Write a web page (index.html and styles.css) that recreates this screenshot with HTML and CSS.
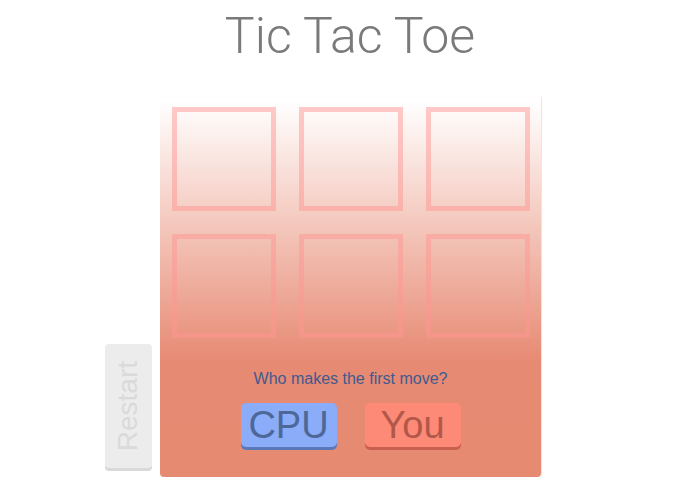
FILE: index.html
```html
<!DOCTYPE html>
<html>
<head>
<meta charset="utf-8">
<link rel="stylesheet" href="styles.css">
</head>
<body>
<div class="page">
  <h1 class="title">Tic Tac Toe</h1>
  <div class="stage">
    <div class="side">
      <button class="restart"><span>Restart</span></button>
    </div>
    <div class="panel">
      <div class="board">
        <div class="cell"></div><div class="cell"></div><div class="cell"></div>
        <div class="cell"></div><div class="cell"></div><div class="cell"></div>
      </div>
      <p class="prompt">Who makes the first move?</p>
      <div class="choices">
        <button class="choice cpu">CPU</button>
        <button class="choice you">You</button>
      </div>
    </div>
    <div class="side"></div>
  </div>
</div>
</body>
</html>
```
FILE: styles.css
```css
html, body { margin: 0; padding: 0; background: #fff; }
.page { padding-top: 8px; font-family: "Liberation Sans", Arial, sans-serif; }
.title {
  margin: 0 0 33px;
  text-align: center;
  font-family: Roboto, "Liberation Sans", sans-serif;
  font-weight: 300;
  font-size: 50px;
  line-height: 56px;
  color: #7a7a7a;
}
.stage {
  display: grid;
  grid-template-columns: 1fr 381px 1fr;
  column-gap: 8px;
}
.side { display: flex; justify-content: flex-end; align-items: flex-end; }
.restart {
  width: 47px;
  height: 124px;
  margin-bottom: 9px;
  padding: 0;
  border: none;
  border-radius: 4px;
  background: #ececec;
  box-shadow: 0 3px 0 #d9d9d9;
  display: flex;
  align-items: center;
  justify-content: center;
}
.restart span {
  writing-mode: vertical-rl;
  transform: rotate(180deg);
  font-family: "Liberation Sans", Arial, sans-serif;
  font-size: 28px;
  color: #dadada;
}
.panel {
  height: 380px;
  box-sizing: border-box;
  padding: 10px 11px 0 12px;
  border-radius: 0 0 4px 4px;
  background: linear-gradient(to bottom, #ffffff 0px, #ffffff 4px, #e78a73 265px, #e68a72 100%);
  box-shadow: 1px 0 1px rgba(255, 210, 200, 0.8);
}
.board {
  display: grid;
  grid-template-columns: repeat(3, 104px);
  grid-auto-rows: 104px;
  gap: 23px;
}
.cell {
  box-sizing: border-box;
  border: 5px solid rgba(255, 150, 145, 0.5);
}
.prompt {
  margin: 32px 0 0;
  text-align: center;
  font-size: 16px;
  line-height: 18px;
  color: #3f5a8f;
}
.choices {
  display: flex;
  justify-content: center;
  gap: 28px;
  margin-top: 15px;
}
.choice {
  width: 96px;
  height: 44px;
  padding: 0;
  border: none;
  border-radius: 5px;
  font-family: "Liberation Sans", Arial, sans-serif;
  font-size: 38px;
  line-height: 44px;
}
.cpu { background: #8aacf9; color: #4d6898; box-shadow: 0 3px 0 #5b78b8; }
.you { background: #fd8a77; color: #b1584a; box-shadow: 0 3px 0 #c8604f; }
```
